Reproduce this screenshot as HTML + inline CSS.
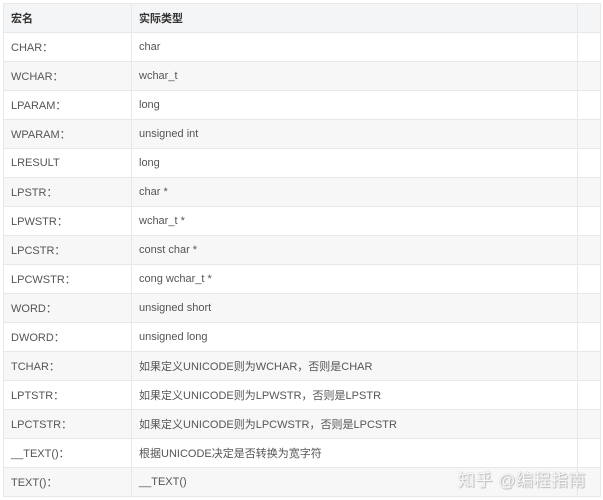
<!DOCTYPE html>
<html><head><meta charset="utf-8"><style>
body{margin:0;background:#fff;width:603px;height:500px;overflow:hidden;font-family:"Liberation Sans","Noto Sans CJK SC",sans-serif;}
table{position:absolute;left:3px;top:3px;border-collapse:collapse;width:598px;table-layout:fixed;}
td{height:28px;border:1px solid #e8e8e8;font-size:11px;color:#555;padding:0 0 0 7px;white-space:nowrap;}
tr:nth-child(odd) td{background:#f7f7f7;}
tr.h td{background:#f4f5f6;font-weight:bold;color:#333;}
.wm{position:absolute;left:458px;top:466px;font-size:17px;color:#fafafa;text-shadow:0 0 1px #aaa,1px 1px 1px #bbb;letter-spacing:0.5px;}
</style></head><body>
<table>
<colgroup><col style="width:128px"><col style="width:446px"><col></colgroup>
<tr class="h"><td>宏名</td><td>实际类型</td><td></td></tr>
<tr><td>CHAR：</td><td>char</td><td></td></tr>
<tr><td>WCHAR：</td><td>wchar_t</td><td></td></tr>
<tr><td>LPARAM：</td><td>long</td><td></td></tr>
<tr><td>WPARAM：</td><td>unsigned int</td><td></td></tr>
<tr><td>LRESULT</td><td>long</td><td></td></tr>
<tr><td>LPSTR：</td><td>char *</td><td></td></tr>
<tr><td>LPWSTR：</td><td>wchar_t *</td><td></td></tr>
<tr><td>LPCSTR：</td><td>const char *</td><td></td></tr>
<tr><td>LPCWSTR：</td><td>cong wchar_t *</td><td></td></tr>
<tr><td>WORD：</td><td>unsigned short</td><td></td></tr>
<tr><td>DWORD：</td><td>unsigned long</td><td></td></tr>
<tr><td>TCHAR：</td><td>如果定义UNICODE则为WCHAR，否则是CHAR</td><td></td></tr>
<tr><td>LPTSTR：</td><td>如果定义UNICODE则为LPWSTR，否则是LPSTR</td><td></td></tr>
<tr><td>LPCTSTR：</td><td>如果定义UNICODE则为LPCWSTR，否则是LPCSTR</td><td></td></tr>
<tr><td>__TEXT()：</td><td>根据UNICODE决定是否转换为宽字符</td><td></td></tr>
<tr><td>TEXT()：</td><td>__TEXT()</td><td></td></tr>
</table>
<div class="wm">知乎 @编程指南</div>
</body></html>
